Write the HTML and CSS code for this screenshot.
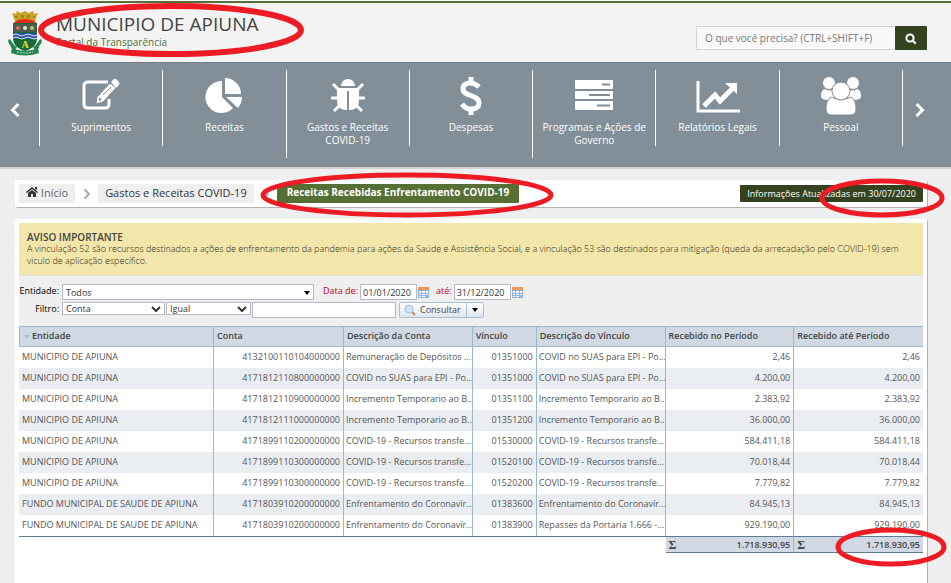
FILE: index.html
```
<!DOCTYPE html>
<html lang="pt-BR">
<head>
<meta charset="UTF-8">
<meta name="viewport" content="width=device-width, initial-scale=1.0">
<title>Portal da Transparência - Municipio de Apiuna</title>
<link rel="stylesheet" href="styles.css">
</head>
<body>

<header class="header">
    <svg class="crest" viewBox="0 0 36 46" width="36" height="46" aria-hidden="true">
        <path d="M5 3l4 1 1-3 4 2 4-2 4 2 4-2 1 3 4-1-3 8H8z" fill="#c9a227"/>
        <path d="M8 6h3v2H8zM14 5h3v3h-3zM20 5h3v3h-3zM26 6h2v2h-2z" fill="#a8851c"/>
        <path d="M7 13c2-5 20-5 22 0z" fill="#e0281e"/>
        <path d="M6 13h24v15c0 7-5 11-12 13C11 39 6 35 6 28z" fill="#176b3a"/>
        <path d="M7 14h22v8H7z" fill="#4d5a50"/>
        <circle cx="11" cy="18" r="2" fill="#e06a5a"/>
        <circle cx="18" cy="18" r="2" fill="#d8e8d8"/>
        <circle cx="25" cy="18" r="2" fill="#b9c86a"/>
        <path d="M6 23h24v6H6z" fill="#2f4fa5"/>
        <path d="M6 25q3-2 6 0t6 0 6 0 6 0M6 28q3-2 6 0t6 0 6 0 6 0" fill="none" stroke="#dfe8f6"/>
        <path d="M2 29c-3 4 3 6 2 9l4 2 2-3c-5-2-4-6-8-8zM34 29c3 4-3 6-2 9l-4 2-2-3c5-2 4-6 8-8z" fill="#258553"/>
        <path d="M5 38q13 6 26 0l1 5q-14 5-28 0z" fill="#258553"/>
        <path d="M10 42q8 2 16 0" fill="none" stroke="#c7e3d2" stroke-dasharray="2 1"/>
        <text class="crest-letter" x="18" y="38" text-anchor="middle">A</text>
    </svg>
    <div class="brand">
        <h1>MUNICIPIO DE APIUNA</h1>
        <p>Portal da Transparência</p>
        <svg class="mark mark-brand" viewBox="0 0 266 56" aria-hidden="true"><ellipse cx="133" cy="28" rx="130" ry="24"/></svg>
    </div>
    <form class="search">
        <input type="text" placeholder="O que você precisa? (CTRL+SHIFT+F)" aria-label="Pesquisar">
        <button type="button" aria-label="Buscar">
            <svg viewBox="0 0 12 12" width="12" height="12"><circle cx="5" cy="5" r="3.6"/><path d="M7.8 7.8l3 3"/></svg>
        </button>
    </form>
</header>

<nav class="menu">
    <button class="arrow" type="button" aria-label="Anterior"><svg viewBox="0 0 12 16" width="12" height="16"><path d="M9.500 2L3.500 8l6 6"/></svg></button>
    <a class="menu-item" href="#">
        <svg viewBox="0 0 40 40">
            <path d="M27 6H7Q3 6 3 10v18q0 4 4 4h17q4 0 4-4v-5" fill="none" stroke="#fff" stroke-width="3"/>
            <path d="M16 21L29 7l6 5-13 14-7 2z" stroke="#828f98" stroke-width="1"/>
            <path d="M30 6l3-3q1-1 3 1l2 2q1 1 0 3l-3 3z"/>
            <path d="M18 21l3 3-3 1z" fill="#828f98"/><path d="M22 19l8-8" stroke="#828f98"/>
        </svg>
        Suprimentos
    </a>
    <a class="menu-item" href="#">
        <svg viewBox="0 0 40 40">
            <path d="M18 5v16l11 11A16 16 0 1 1 18 5z"/>
            <path d="M21 2a16 16 0 0 1 16 16H21z"/>
            <path d="M22 21h16q0 6-4 11z"/>
        </svg>
        Receitas
    </a>
    <a class="menu-item" href="#">
        <svg viewBox="0 0 40 40">
            <path d="M13 10a7 7 0 0 1 14 0z"/>
            <path d="M9 12h22v14q-1 8-9 8h-4q-8 0-9-8z"/>
            <path d="M11 14L5 8M29 14l6-6M10 22H3M30 22h7M12 29l-6 6M28 29l6 6" stroke="#fff" stroke-width="3"/>
            <path d="M20 15v19" stroke="#828f98" stroke-width="2"/>
        </svg>
        Gastos e Receitas COVID-19
    </a>
    <a class="menu-item" href="#">
        <svg viewBox="0 0 40 40">
            <path d="M28 11c-3-3-6-4-9-4-4 0-7 2-7 6 0 8 16 5 16 14 0 4-3 6-8 6-4 0-7-2-9-5" fill="none" stroke="#fff" stroke-width="5"/>
            <path d="M20 1v7M20 32v7" stroke="#fff" stroke-width="5"/>
        </svg>
        Despesas
    </a>
    <a class="menu-item" href="#">
        <svg viewBox="0 0 40 40">
            <rect x="1" y="4" width="38" height="9" rx="1"/><rect x="1" y="15" width="38" height="8" rx="1"/><rect x="1" y="25" width="38" height="9" rx="1"/>
            <path d="M28 8.500h8M15 19h21M23 29.500h13" stroke="#828f98" stroke-width="2"/>
        </svg>
        Programas e Ações de Governo
    </a>
    <a class="menu-item" href="#">
        <svg class="wide" viewBox="0 0 44 40">
            <path d="M2 5v30h42" fill="none" stroke="#fff" stroke-width="3"/>
            <path d="M8 30l11-11 5 6L38 11" fill="none" stroke="#fff" stroke-width="5"/>
            <path d="M29 7h12v11z"/>
        </svg>
        Relatórios Legais
    </a>
    <a class="menu-item" href="#">
        <svg viewBox="0 0 40 40">
            <circle cx="8" cy="7" r="6"/><circle cx="32" cy="7" r="6"/>
            <path d="M4 13q5 3 9 0v9l-6 2q-7 0-7-4 0-6 4-7zM36 13q-5 3-9 0v9l6 2q7 0 7-4 0-6-4-7z"/>
            <path d="M10 21q10 5 20 0 5 3 5 12 0 6-6 6H11q-6 0-6-6 0-9 5-12z" stroke="#828f98"/>
            <circle cx="20" cy="15" r="9" stroke="#828f98"/>
        </svg>
        Pessoal
    </a>
    <button class="arrow arrow-next" type="button" aria-label="Próximo"><svg viewBox="0 0 12 16" width="12" height="16"><path d="M2.500 2l6 6-6 6"/></svg></button>
</nav>

<main>
    <div class="breadcrumb">
        <a class="crumb crumb-home" href="#">
            <svg viewBox="0 0 12 10" width="12" height="10"><path d="M6 0l6 5-1 1-5-4-5 4-1-1zM9 0h2v3L9 2zM2 6l4-3 4 3v4H7V7H5v3H2z"/></svg>
            Início
        </a>
        <svg class="sep" viewBox="0 0 8 12" width="8" height="12"><path d="M1.500 1.500L6 6l-4.500 4.500"/></svg>
        <a class="crumb" href="#">Gastos e Receitas COVID-19</a>
        <svg class="sep" viewBox="0 0 8 12" width="8" height="12"><path d="M1.500 1.500L6 6l-4.500 4.500"/></svg>
        <span class="crumb crumb-current">
            Receitas Recebidas Enfrentamento COVID-19
            <svg class="mark mark-crumb" viewBox="0 0 294 48" aria-hidden="true"><ellipse cx="147" cy="24" rx="144" ry="20"/></svg>
        </span>
        <span class="updated">
            Informações Atualizadas em 30/07/2020
            <svg class="mark mark-updated" viewBox="0 0 126 40" aria-hidden="true"><ellipse cx="63" cy="20" rx="60" ry="17"/></svg>
        </span>
    </div>

    <section class="panel">
        <div class="notice">
            <h2>AVISO IMPORTANTE</h2>
            <p>A vinculação 52 são recursos destinados a ações de enfrentamento da pandemia para ações da Saúde e Assistência Social, e a vinculação 53 são destinados para mitigação (queda da arrecadação pelo COVID-19) sem viculo de aplicação específico.</p>
        </div>

        <form class="filters">
            <div class="line">
                <label class="name" for="entidade">Entidade:</label>
                <span class="drop entity">
                    <select id="entidade"><option>Todos</option></select>
                    <svg viewBox="0 0 6 4" width="6" height="4"><path d="M0 0h6L3 4z"/></svg>
                </span>
                <label class="date-label" for="de">Data de:</label>
                <input class="date" id="de" type="text" value="01/01/2020">
                <svg class="calendar" viewBox="0 0 11 11" width="11" height="11"><rect width="11" height="11" fill="#8fb3e0"/><rect width="11" height="3" fill="#f0965a"/><path d="M1 4h2v2H1zM4 4h3v2H4zM8 4h2v2H8zM1 7h2v1H1zM4 7h3v1H4zM8 7h2v1H8zM1 9h2v1H1zM4 9h3v1H4z" fill="#fff"/></svg>
                <label class="date-label" for="ate">até:</label>
                <input class="date" id="ate" type="text" value="31/12/2020">
                <svg class="calendar" viewBox="0 0 11 11" width="11" height="11"><rect width="11" height="11" fill="#8fb3e0"/><rect width="11" height="3" fill="#f0965a"/><path d="M1 4h2v2H1zM4 4h3v2H4zM8 4h2v2H8zM1 7h2v1H1zM4 7h3v1H4zM8 7h2v1H8zM1 9h2v1H1zM4 9h3v1H4z" fill="#fff"/></svg>
            </div>
            <div class="line line-filter">
                <label class="name" for="campo">Filtro:</label>
                <span class="drop field">
                    <select id="campo"><option>Conta</option></select>
                    <svg class="chevron" viewBox="0 0 10 6" width="10" height="6"><path d="M1 1l4 4 4-4"/></svg>
                </span>
                <span class="drop operator">
                    <select aria-label="Operador"><option>Igual</option></select>
                    <svg class="chevron" viewBox="0 0 10 6" width="10" height="6"><path d="M1 1l4 4 4-4"/></svg>
                </span>
                <input class="value" type="text" aria-label="Valor">
                <div class="split">
                    <button type="button">
                        <svg viewBox="0 0 12 12" width="12" height="12"><path d="M8 8l3 3" stroke="#c08a4a" stroke-width="2"/><circle cx="5" cy="5" r="4" fill="#cfe3fa" stroke="#9dbfe6"/></svg>
                        <span>Consultar</span>
                    </button>
                    <button class="more" type="button" aria-label="Mais opções"><svg viewBox="0 0 6 4" width="6" height="4"><path d="M0 0h6L3 4z"/></svg></button>
                </div>
            </div>
        </form>

        <table class="grid">
            <colgroup>
                <col class="c-entity"><col class="c-account"><col class="c-text"><col class="c-link"><col class="c-text"><col class="c-text"><col class="c-text">
            </colgroup>
            <thead>
                <tr>
                    <th><svg class="sort" viewBox="0 0 6 4" width="6" height="4"><path d="M0 0h6L3 4z"/></svg>Entidade</th>
                    <th>Conta</th>
                    <th>Descrição da Conta</th>
                    <th>Vínculo</th>
                    <th>Descrição do Vínculo</th>
                    <th>Recebido no Período</th>
                    <th>Recebido até Período</th>
                </tr>
            </thead>
            <tbody>
                <tr><td>MUNICIPIO DE APIUNA</td><td class="num">4132100110104000000</td><td>Remuneração de Depósitos ...</td><td class="num">01351000</td><td>COVID no SUAS para EPI - Po...</td><td class="num">2,46</td><td class="num">2,46</td></tr>
                <tr><td>MUNICIPIO DE APIUNA</td><td class="num">4171812110800000000</td><td>COVID no SUAS para EPI - Po...</td><td class="num">01351000</td><td>COVID no SUAS para EPI - Po...</td><td class="num">4.200,00</td><td class="num">4.200,00</td></tr>
                <tr><td>MUNICIPIO DE APIUNA</td><td class="num">4171812110900000000</td><td>Incremento Temporario ao B...</td><td class="num">01351100</td><td>Incremento Temporario ao B...</td><td class="num">2.383,92</td><td class="num">2.383,92</td></tr>
                <tr><td>MUNICIPIO DE APIUNA</td><td class="num">4171812111000000000</td><td>Incremento Temporario ao B...</td><td class="num">01351200</td><td>Incremento Temporario ao B...</td><td class="num">36.000,00</td><td class="num">36.000,00</td></tr>
                <tr><td>MUNICIPIO DE APIUNA</td><td class="num">4171899110200000000</td><td>COVID-19 - Recursos transfe...</td><td class="num">01530000</td><td>COVID-19 - Recursos transfe...</td><td class="num">584.411,18</td><td class="num">584.411,18</td></tr>
                <tr><td>MUNICIPIO DE APIUNA</td><td class="num">4171899110300000000</td><td>COVID-19 - Recursos transfe...</td><td class="num">01520100</td><td>COVID-19 - Recursos transfe...</td><td class="num">70.018,44</td><td class="num">70.018,44</td></tr>
                <tr><td>MUNICIPIO DE APIUNA</td><td class="num">4171899110300000000</td><td>COVID-19 - Recursos transfe...</td><td class="num">01520200</td><td>COVID-19 - Recursos transfe...</td><td class="num">7.779,82</td><td class="num">7.779,82</td></tr>
                <tr><td>FUNDO MUNICIPAL DE SAUDE DE APIUNA</td><td class="num">4171803910200000000</td><td>Enfrentamento do Coronavír...</td><td class="num">01383600</td><td>Enfrentamento do Coronavír...</td><td class="num">84.945,13</td><td class="num">84.945,13</td></tr>
                <tr><td>FUNDO MUNICIPAL DE SAUDE DE APIUNA</td><td class="num">4171803910200000000</td><td>Enfrentamento do Coronavír...</td><td class="num">01383900</td><td>Repasses da Portaria 1.666 -...</td><td class="num">929.190,00</td><td class="num">929.190,00</td></tr>
            </tbody>
            <tfoot>
                <tr>
                    <td class="empty" colspan="5"></td>
                    <td class="total"><div><span class="sigma">Σ</span><span>1.718.930,95</span></div></td>
                    <td class="total"><div><span class="sigma">Σ</span><span>1.718.930,95</span><svg class="mark mark-total" viewBox="0 0 112 40" aria-hidden="true"><ellipse cx="56" cy="20" rx="53" ry="17"/></svg></div></td>
                </tr>
            </tfoot>
        </table>
    </section>
</main>

</body>
</html>
```
FILE: styles.css
```
* {
    box-sizing: border-box;
}
body {
    margin: 0;
    min-height: 100vh;
    display: flex;
    flex-direction: column;
    background: #efefef;
    font-family: "Open Sans", "Noto Sans", sans-serif;
    font-size: 10px;
    color: #555;
    overflow-x: hidden;
}
a {
    color: inherit;
    text-decoration: none;
}
h1, h2, p {
    margin: 0;
}
button, input, select {
    font: inherit;
    margin: 0;
}

/* header */
.header {
    display: flex;
    height: 61px;
    margin-top: 1px;
    padding: 0 24px 0 7px;
    border-top: 2px solid #566f35;
    background: #f3f3f3;
    box-shadow: 0 -1px #fff;
}
.header, .menu {
    flex-shrink: 0;
}
.crest {
    margin-top: 7px;
}
.crest-letter {
    font: bold 10px "Liberation Serif", serif;
    fill: #f5e11d;
}
.brand {
    position: relative;
    margin-left: 13px;
    padding-top: 8px;
}
.brand h1 {
    font-size: 19px;
    font-weight: 400;
    line-height: 26px;
    color: #444;
}
.brand p {
    font-size: 10px;
    line-height: 10px;
    color: #566f35;
}
.search {
    display: flex;
    width: 231px;
    height: 24px;
    margin: 23px 0 0 auto;
}
.search input {
    flex: 1;
    min-width: 0;
    padding: 0 8px;
    border: 1px solid #d3d3d8;
    border-right: 0;
    background: #f9f9f9;
    font-size: 10px;
}
.search input::placeholder {
    color: #777;
}
.search button {
    width: 32px;
    padding: 4px 0 0;
    border: 0;
    border-radius: 1px;
    background: #344220;
}
.search svg {
    fill: none;
    stroke: #fff;
    stroke-width: 2;
}

/* menu */
.menu {
    display: flex;
    height: 105px;
    padding-top: 7px;
    border-top: 1px solid #6e7d88;
    border-bottom: 1px solid #7b8891;
    background: #828f98;
    box-shadow: 0 2px #d2d2d2;
    color: #fff;
    align-items: flex-start;
}
.arrow {
    width: 39px;
    height: 80px;
    padding: 0 10px 0 0;
    border: 0;
    background: none;
}
.arrow-next {
    width: 48px;
    padding: 0 14px 0 0;
}
.arrow svg {
    vertical-align: middle;
    fill: none;
    stroke: #fff;
    stroke-width: 3;
}
.menu-item {
    flex: 1;
    min-height: 76px;
    padding: 6px 5px 11px;
    border-left: 1px solid #fff;
    font-size: 10px;
    line-height: 13px;
    text-align: center;
}
.menu-item:nth-last-child(2) {
    border-right: 1px solid #fff;
}
.menu-item svg {
    display: block;
    width: 40px;
    height: 40px;
    margin: 0 auto 5px;
    fill: #fff;
}
.menu-item .wide {
    width: 44px;
}

/* breadcrumb */
main {
    flex: 1;
    display: flex;
    flex-direction: column;
    margin: 13px 24px 0 15px;
}
.breadcrumb {
    display: flex;
    align-items: center;
    height: 27px;
    margin-bottom: 12px;
    padding: 0 4px;
    border-radius: 2px;
    background: #fff;
    box-shadow: 1px 1px #b3b3b3;
}
.crumb {
    height: 19px;
    padding: 0 7px;
    border-radius: 1px;
    background: #efefef;
    font-size: 11px;
    line-height: 17px;
    color: #333;
}
.crumb-home {
    color: #666;
}
.crumb-home svg {
    fill: #333;
}
.sep {
    margin: 0 7px 0 8px;
    fill: none;
    stroke: #aaa;
    stroke-width: 2;
}
.crumb-current {
    position: relative;
    padding: 0 10px;
    background: #566f35;
    font-size: 10px;
    font-weight: 700;
    color: #fff;
}
.updated {
    position: relative;
    margin-left: auto;
    padding: 0 7px;
    border-radius: 1px;
    background: #344220;
    font-size: 9px;
    line-height: 17px;
    color: #fff;
}

/* panel */
.panel {
    flex: 1;
    padding: 4px;
    border-radius: 2px 2px 0 0;
    background: #fff;
    box-shadow: 1px 1px #b3b3b3;
}
.notice {
    padding: 8px;
    border-bottom: 1px solid #dcdcdc;
    background: #f2e6ab;
    line-height: 12px;
}
.notice h2 {
    font-size: 10px;
    font-weight: 600;
    color: #444;
}
.notice p {
    font-size: 9px;
    font-weight: 300;
    color: #2c2810;
}
.filters {
    height: 50px;
    padding-top: 8px;
    background: #efefef;
    font-size: 9px;
    color: #000;
}
.line {
    display: flex;
    height: 16px;
}
.line-filter {
    margin-top: 2px;
}
.name {
    width: 43px;
    padding-right: 3px;
    line-height: 13px;
    text-align: right;
}
.drop {
    position: relative;
}
.drop select {
    display: block;
    width: 100%;
    height: 100%;
    padding: 0 3px;
    border: 1px solid #b5b8c8;
    border-radius: 0;
    background: #fff;
    color: #333;
    appearance: none;
}
.drop svg {
    position: absolute;
    top: 7px;
    right: 4px;
}
.drop .chevron {
    top: 4px;
    fill: none;
    stroke: #333;
    stroke-width: 2;
}
.entity {
    width: 252px;
    margin-right: 2px;
}
.date-label {
    padding: 0 2px 0 7px;
    line-height: 13px;
    color: #c00018;
}
.date, .value {
    height: 16px;
    padding: 0 2px;
    border: 1px solid #b5b8c8;
    background: #fff;
    color: #333;
}
.date {
    width: 57px;
}
.calendar {
    margin: 3px 0 0 1px;
}
.field {
    width: 103px;
    height: 13px;
    margin-right: 1px;
}
.operator {
    width: 85px;
    height: 13px;
    margin-right: 1px;
}
.drop.field select, .drop.operator select {
    line-height: 11px;
}
.value {
    width: 144px;
}
.split {
    display: flex;
    height: 16px;
    margin-left: 3px;
    border: 1px solid #a9bfd3;
    border-radius: 2px;
    background: linear-gradient(#fff, #dfe5ee);
}
.split button {
    display: flex;
    align-items: center;
    gap: 4px;
    width: 66px;
    padding: 0 4px;
    border: 0;
    background: none;
    color: #444;
    line-height: 12px;
}
.split .more {
    width: 17px;
    padding: 0 5px;
    border-left: 1px solid #a9bfd3;
}

/* grid */
.grid {
    width: 100%;
    table-layout: fixed;
    border-collapse: separate;
    border-spacing: 0;
    font-size: 9px;
}
.c-entity {
    width: 195px;
}
.c-account {
    width: 130px;
}
.c-link {
    width: 64px;
}
.grid th {
    height: 21px;
    padding: 0 3px 3px;
    border: 1px solid #9fb6cd;
    border-left: 0;
    background: #d0d9e3;
    font-weight: 600;
    text-align: left;
    color: #444;
}
.grid th:first-child {
    border-left: 1px solid #9fb6cd;
}
.grid th:last-child, .grid tbody td:last-child {
    border-right: 0;
}
.sort {
    margin: 0 2px 0 1px;
    fill: #9dbfe0;
}
.grid tbody td {
    height: 21px;
    padding: 0 3px 3px 2px;
    border-right: 1px solid #9fb6cd;
    white-space: nowrap;
    overflow: hidden;
}
.grid tbody td:first-child {
    padding-left: 3px;
}
.grid .num {
    text-align: right;
}
.grid tbody tr:nth-child(even) {
    background: #eaedf2;
}
.grid tfoot td {
    height: 17px;
    padding: 0;
    border-top: 1px solid #5f7a94;
}
.grid .total {
    padding: 0 3px;
    border-right: 1px solid #9fb6cd;
    border-bottom: 1px solid #5f7a94;
    background: #d0d9e3;
    font-weight: 600;
    color: #444;
}
.grid .total:last-child {
    border-right: 0;
}
.total div {
    position: relative;
    display: flex;
    justify-content: space-between;
    line-height: 14px;
}
.sigma {
    font-family: "Liberation Serif", serif;
    font-size: 12px;
}

/* hand drawn circles that point out the important parts */
.mark {
    position: absolute;
    z-index: 2;
    fill: none;
    stroke: #ed1c24;
    stroke-width: 5;
    pointer-events: none;
}
.mark-brand {
    width: 266px;
    height: 56px;
    top: -1px;
    left: -18px;
    stroke-width: 6;
}
.mark-crumb {
    width: 294px;
    height: 48px;
    top: -13px;
    left: -17px;
}
.mark-updated {
    width: 126px;
    height: 40px;
    top: -7px;
    right: -22px;
}
.mark-total {
    width: 112px;
    height: 40px;
    top: -11px;
    right: -27px;
}
```
